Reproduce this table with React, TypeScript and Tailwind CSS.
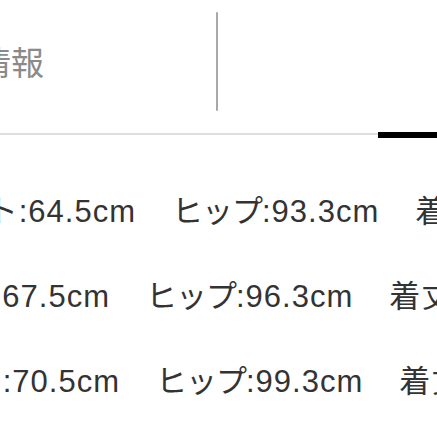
const rows = [
  { lead: 'ウエスト:64.5cm', leadW: 'w-[136px]', hip: 'ヒップ:93.3cm', rest: '着丈:40.5cm' },
  { lead: 'ウエスト:67.5cm', leadW: 'w-[110px]', hip: 'ヒップ:96.3cm', rest: '着丈:41cm' },
  { lead: 'ウエスト:70.5cm', leadW: 'w-[120px]', hip: 'ヒップ:99.3cm', rest: '着丈:41.5cm' },
]

const font = { fontFamily: '"Liberation Sans", "Noto Sans CJK JP", sans-serif' }

export default function App() {
  return (
    <div className="w-[437px] h-[437px] overflow-hidden bg-white" style={font}>
      {/* tabs */}
      <div className="flex h-[132px]">
        <div className="w-[216px] flex items-center pb-[6px]">
          <div className="w-[44px] overflow-hidden flex justify-end">
            <span className="whitespace-nowrap text-[33px] leading-none text-[#8a8a8a]">商品情報</span>
          </div>
        </div>
        <div className="w-[2px] h-[99px] mt-[12px] bg-[#a9a9a9] rounded-full" />
        <div className="flex-1" />
      </div>
      <div className="flex items-start h-[6px]">
        <div className="flex-1 h-[2px] mt-[1px] bg-[#dedede]" />
        <div className="w-[59px] h-[6px] bg-black" />
      </div>

      {/* sizes */}
      <div className="mt-[32px] text-[31px] tracking-[1px] text-[#333]">
        {rows.map((r, i) => (
          <div key={i} className="flex items-center h-[85px] whitespace-nowrap">
            <div className={`${r.leadW} shrink-0 overflow-hidden flex justify-end`}>
              <span>{r.lead}</span>
            </div>
            <span className="ml-[36px] shrink-0">
              <span className="tracking-[-1px]">ヒップ</span>
              {r.hip.slice(3)}
            </span>
            <span className="ml-[36px] shrink-0">{r.rest}</span>
          </div>
        ))}
      </div>
      <div className="mt-[12px] h-[2px] bg-[#dedede]" />
    </div>
  )
}
